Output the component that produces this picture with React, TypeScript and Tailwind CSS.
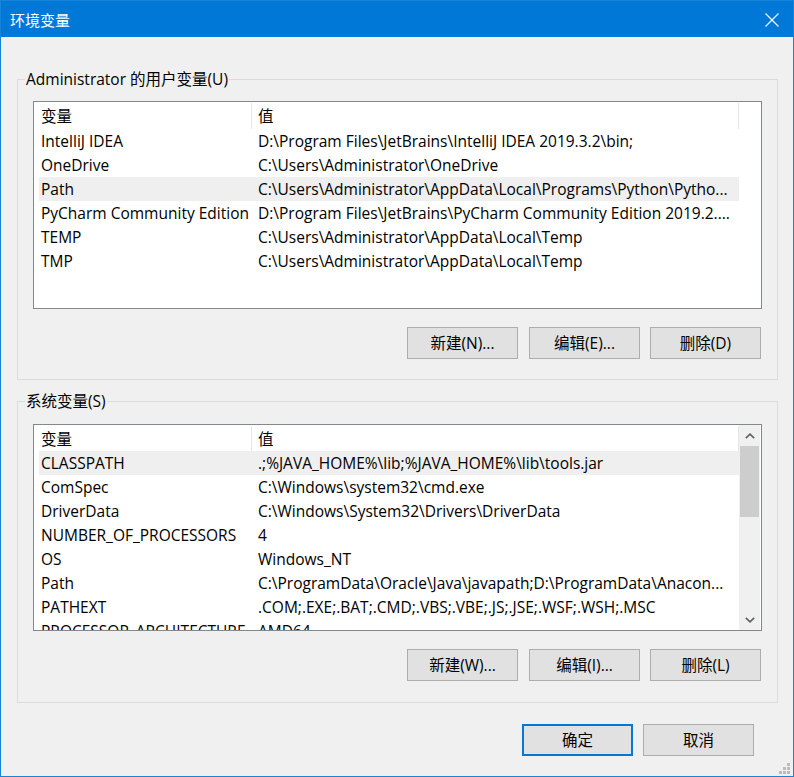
import React from "react";

type Row = { name: string; value: string; selected?: boolean };

const userRows: Row[] = [
  { name: "IntelliJ IDEA", value: "D:\\Program Files\\JetBrains\\IntelliJ IDEA 2019.3.2\\bin;" },
  { name: "OneDrive", value: "C:\\Users\\Administrator\\OneDrive" },
  { name: "Path", value: "C:\\Users\\Administrator\\AppData\\Local\\Programs\\Python\\Pytho...", selected: true },
  { name: "PyCharm Community Edition", value: "D:\\Program Files\\JetBrains\\PyCharm Community Edition 2019.2...." },
  { name: "TEMP", value: "C:\\Users\\Administrator\\AppData\\Local\\Temp" },
  { name: "TMP", value: "C:\\Users\\Administrator\\AppData\\Local\\Temp" },
];

const sysRows: Row[] = [
  { name: "CLASSPATH", value: ".;%JAVA_HOME%\\lib;%JAVA_HOME%\\lib\\tools.jar", selected: true },
  { name: "ComSpec", value: "C:\\Windows\\system32\\cmd.exe" },
  { name: "DriverData", value: "C:\\Windows\\System32\\Drivers\\DriverData" },
  { name: "NUMBER_OF_PROCESSORS", value: "4" },
  { name: "OS", value: "Windows_NT" },
  { name: "Path", value: "C:\\ProgramData\\Oracle\\Java\\javapath;D:\\ProgramData\\Anacon..." },
  { name: "PATHEXT", value: ".COM;.EXE;.BAT;.CMD;.VBS;.VBE;.JS;.JSE;.WSF;.WSH;.MSC" },
  { name: "PROCESSOR_ARCHITECTURE", value: "AMD64" },
];

function Chevron({ up }: { up?: boolean }) {
  return (
    <svg width="10" height="6" viewBox="0 0 10 6" className="block">
      {up ? (
        <polyline points="0.8,5.2 5,1.2 9.2,5.2" fill="none" stroke="#606060" strokeWidth="1.6" />
      ) : (
        <polyline points="0.8,0.8 5,4.8 9.2,0.8" fill="none" stroke="#606060" strokeWidth="1.6" />
      )}
    </svg>
  );
}

function ListView({ rows, tall, scroll }: { rows: Row[]; tall?: boolean; scroll?: boolean }) {
  return (
    <div
      className={
        "flex border border-[#828790] bg-white overflow-hidden " + (tall ? "h-[208px]" : "h-[207px]")
      }
    >
      <div className="flex flex-col flex-1 overflow-hidden">
        <div className={"flex shrink-0 " + (tall ? "h-[27px]" : "h-[26px]")}>
          <div className="w-[218px] shrink-0 border-r border-[#e5e5e5] pl-[7px] flex items-center mt-[1px]">
            变量
          </div>
          <div className="w-[487px] shrink-0 border-r border-[#e5e5e5] pl-[6px] flex items-center mt-[1px]">
            值
          </div>
        </div>
        {rows.map((r) => (
          <div
            key={r.name}
            className={
              "flex h-[24px] ml-[5px] w-[700px] shrink-0 items-center " + (r.selected ? "bg-[#efefef]" : "")
            }
          >
            <div className="w-[213px] shrink-0 pl-[2px] overflow-hidden whitespace-nowrap">{r.name}</div>
            <div className="flex-1 pl-[6px] overflow-hidden whitespace-nowrap">{r.value}</div>
          </div>
        ))}
      </div>
      {scroll && (
        <div className="w-[21px] mr-[1px] shrink-0 bg-[#f0f0f0] flex flex-col">
          <div className="h-[21px] flex items-center justify-center shrink-0">
            <Chevron up />
          </div>
          <div className="h-[71px] mx-[1px] bg-[#cdcdcd] shrink-0" />
          <div className="flex-1" />
          <div className="h-[21px] flex items-center justify-center shrink-0">
            <Chevron />
          </div>
        </div>
      )}
    </div>
  );
}

function Btn({ children, className = "", primary }: { children: React.ReactNode; className?: string; primary?: boolean }) {
  return (
    <div
      className={
        "w-[111px] h-[32px] flex items-center justify-center bg-[#e1e1e1] " +
        (primary ? "border-2 border-[#0078d7] " : "border border-[#adadad] ") +
        className
      }
    >
      {children}
    </div>
  );
}

export default function App() {
  return (
    <div className="w-[794px] h-[777px] bg-[#f0f0f0] border border-[#1883d7] flex flex-col relative overflow-hidden text-black text-[15.5px] leading-[20px] font-['Open_Sans','Noto_Sans_CJK_SC',sans-serif]">
      <div className="h-[36px] shrink-0 bg-[#0078d7] flex items-center pl-[9px] text-white text-[15px] font-['Noto_Sans_CJK_SC',sans-serif]">
        <span className="mt-[1px]">环境变量</span>
        <svg width="14" height="14" viewBox="0 0 14 14" className="ml-auto mr-[14px] mt-[1px]">
          <line x1="0.5" y1="0.5" x2="13.5" y2="13.5" stroke="white" strokeWidth="1.1" />
          <line x1="13.5" y1="0.5" x2="0.5" y2="13.5" stroke="white" strokeWidth="1.1" />
        </svg>
      </div>

      <fieldset className="mt-[32px] ml-[16px] mr-[15px] border border-[#dcdcdc]">
        <legend className="ml-[7px] px-[1px] leading-[20px]">Administrator 的用户变量(U)</legend>
        <div className="pt-[12px] px-[15px] pb-[20px]">
          <ListView rows={userRows} tall />
          <div className="flex justify-end mt-[18px] pr-[1px]">
            <Btn>新建(N)...</Btn>
            <Btn className="ml-[11px]">编辑(E)...</Btn>
            <Btn className="ml-[10px]">删除(D)</Btn>
          </div>
        </div>
      </fieldset>

      <fieldset className="mt-[11px] ml-[16px] mr-[15px] border border-[#dcdcdc]">
        <legend className="ml-[7px] px-[1px] leading-[20px]">系统变量(S)</legend>
        <div className="pt-[13px] px-[15px] pb-[21px]">
          <ListView rows={sysRows} scroll />
          <div className="flex justify-end mt-[18px] pr-[1px]">
            <Btn>新建(W)...</Btn>
            <Btn className="ml-[11px]">编辑(I)...</Btn>
            <Btn className="ml-[10px]">删除(L)</Btn>
          </div>
        </div>
      </fieldset>

      <div className="flex justify-end mt-[21px] pr-[39px]">
        <Btn primary>确定</Btn>
        <Btn className="ml-[10px]">取消</Btn>
      </div>

      <svg width="11" height="11" viewBox="0 0 11 11" className="absolute right-[3px] bottom-[2px]">
        <rect x="8" y="0" width="3" height="3" fill="#bcbcbc" />
        <rect x="4" y="4" width="3" height="3" fill="#bcbcbc" />
        <rect x="8" y="4" width="3" height="3" fill="#bcbcbc" />
        <rect x="0" y="8" width="3" height="3" fill="#bcbcbc" />
        <rect x="4" y="8" width="3" height="3" fill="#bcbcbc" />
        <rect x="8" y="8" width="3" height="3" fill="#bcbcbc" />
      </svg>
    </div>
  );
}
